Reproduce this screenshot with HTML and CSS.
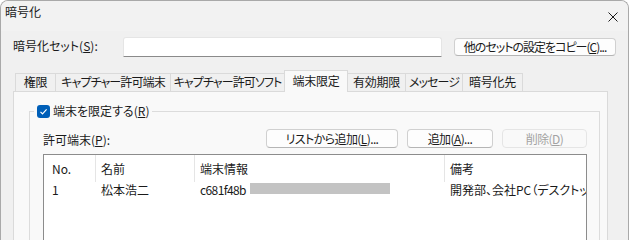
FILE: index.html
```html
<!DOCTYPE html>
<html lang="ja">
	<head>
		<meta charset="utf-8"/>
		<title>暗号化</title>
		<link rel="stylesheet" href="styles.css">
	</head>
	<body>
		<div class="window">
			<div class="titlebar">
				<span class="title">暗号化</span>
				<svg class="close" width="10" height="10" viewBox="0 0 10 10">
					<path d="M0.5 0.5L9.5 9.5M9.5 0.5L0.5 9.5" stroke="#1b1b1b" stroke-width="1" fill="none"/>
				</svg>
			</div>
			<div class="content">
				<div class="set-row">
					<span class="set-label">暗号化セット(<u>S</u>):</span>
					<div class="textbox"></div>
					<button class="btn btn-copy">他のセットの設定をコピー(<u>C</u>)...</button>
				</div>
				<div class="tabs">
					<div class="tab">権限</div>
					<div class="tab tab-kana">キャプチャー許可端末</div>
					<div class="tab tab-kana">キャプチャー許可ソフト</div>
					<div class="tab selected">端末限定</div>
					<div class="tab">有効期限</div>
					<div class="tab tab-kana">メッセージ</div>
					<div class="tab">暗号化先</div>
				</div>
				<div class="panel">
					<fieldset class="group">
						<legend class="group-title">
							<span class="checkbox">
								<svg width="13" height="13" viewBox="0 0 13 13">
									<path d="M3.5 6.8L5.5 8.8L9.6 4.4" stroke="#ffffff" stroke-width="1.2" fill="none"/>
								</svg>
							</span>
							<span>端末を限定する(<u>R</u>)</span>
						</legend>
						<div class="list-bar">
							<span class="list-label">許可端末(<u>P</u>):</span>
							<button class="btn btn-fromlist">リストから追加(<u>L</u>)...</button>
							<button class="btn btn-add">追加(<u>A</u>)...</button>
							<button class="btn btn-delete" disabled>削除(<u>D</u>)</button>
						</div>
						<div class="list">
							<div class="list-head">
								<div class="cell col-no">No.</div>
								<div class="cell col-name">名前</div>
								<div class="cell col-info">端末情報</div>
								<div class="cell col-note">備考</div>
							</div>
							<div class="list-row">
								<div class="cell col-no">1</div>
								<div class="cell col-name">松本浩二</div>
								<div class="cell col-info"><span class="terminal-id">c681f48b</span><span class="masked"></span></div>
								<div class="cell col-note">開発部、会社PC（デスクトップ）</div>
							</div>
						</div>
					</fieldset>
				</div>
			</div>
		</div>
	</body>
</html>
```

FILE: styles.css
```css
html, body {
	margin: 0;
	background-color: #ffffff;
	overflow: hidden;
}
body {
	font-family: "Noto Sans CJK JP", "Noto Sans", sans-serif;
	font-size: 12px;
	font-feature-settings: "palt";
	color: #1a1a1a;
}
u {
	text-underline-offset: 1px;
}
.window {
	width: 629px;
	height: 260px;
	box-sizing: border-box;
	border: 1px solid #a9a9a9;
	border-bottom: none;
	border-radius: 8px 8px 0 0;
	background-color: #f0f0f0;
	overflow: hidden;
}
.titlebar {
	height: 30px;
	box-sizing: border-box;
	padding: 3px 10px 0 4px;
	display: flex;
	justify-content: space-between;
	align-items: flex-start;
	background-color: #f2f2f2;
}
.title {
	line-height: 16px;
}
.close {
	margin-top: 8px;
}
.content {
	padding: 6px 0 0 12px;
}
.set-row {
	display: flex;
	align-items: center;
	height: 20px;
}
.set-label {
	width: 110px;
	line-height: 16px;
	padding-bottom: 3px;
}
.textbox {
	width: 319px;
	height: 20px;
	box-sizing: border-box;
	background-color: #ffffff;
	border: 1px solid #e5e5e5;
	border-bottom-color: #8a8a8a;
	border-radius: 3px 3px 0 0;
	margin-right: 12px;
}
.btn {
	font-family: inherit;
	font-size: 12px;
	font-feature-settings: "palt";
	letter-spacing: -0.6px;
	white-space: nowrap;
	color: #1a1a1a;
	background-color: #fdfdfd;
	border: 1px solid #d0d0d0;
	border-bottom-color: #b5b5b5;
	border-radius: 4px;
	padding: 0;
	height: 19px;
	line-height: 16px;
	box-sizing: border-box;
}
.btn-copy {
	width: 162px;
	height: 18px;
	letter-spacing: -1px;
}
.btn-delete {
	color: #a3a3a3;
	background-color: #f9f9f9;
	border-color: #e5e5e5;
}
.tabs {
	display: flex;
	align-items: flex-end;
	height: 21px;
	margin-top: 13px;
	padding-left: 2px;
	position: relative;
	z-index: 1;
}
.tab {
	height: 18px;
	box-sizing: border-box;
	line-height: 16px;
	text-align: center;
	white-space: nowrap;
	letter-spacing: -0.3px;
	border: 1px solid #dadada;
	border-bottom: none;
	margin-right: -1px;
	background-color: #f0f0f0;
}
.tab-kana {
	letter-spacing: -0.9px;
}
.tab:nth-child(1) { width: 41px; }
.tab:nth-child(2) { width: 116px; }
.tab:nth-child(3) { width: 115px; }
.tab:nth-child(4) { width: 64px; }
.tab:nth-child(5) { width: 59px; }
.tab:nth-child(6) { width: 58px; }
.tab:nth-child(7) { width: 61px; }
.tab.selected {
	height: 22px;
	margin-bottom: -1px;
	line-height: 19px;
	position: relative;
	background-color: #f9f9f9;
}
.panel {
	width: 595px;
	height: 200px;
	box-sizing: border-box;
	background-color: #f9f9f9;
	border: 1px solid #dadada;
	padding: 11px 7px 0 15px;
}
.group {
	margin: 0;
	height: 180px;
	box-sizing: border-box;
	border: 1px solid #dcdcdc;
	padding: 0 12px 0 13px;
}
.group-title {
	display: flex;
	align-items: center;
	gap: 3px;
	margin-left: -9px;
	padding: 0 3px;
	line-height: 16px;
}
.checkbox {
	width: 13px;
	height: 13px;
	border-radius: 3px;
	background-color: #005fb8;
	display: flex;
}
.list-bar {
	display: flex;
	align-items: flex-end;
	gap: 9px;
	margin-top: 10px;
}
.list-label {
	flex: 1;
	line-height: 16px;
}
.btn-fromlist {
	width: 132px;
}
.btn-add {
	width: 86px;
}
.btn-delete {
	width: 85px;
}
.list {
	margin-top: 6px;
	height: 120px;
	background-color: #ffffff;
	border: 1px solid #8c8c8c;
	overflow: hidden;
}
.list-head, .list-row {
	display: grid;
	grid-template-columns: 52px 99px 250px 1fr;
}
.list-head .cell {
	height: 27px;
	line-height: 27px;
	border-right: 1px solid #e5e5e5;
}
.list-head .col-note {
	border-right: none;
}
.list-row .cell {
	line-height: 16px;
}
.cell {
	padding-left: 5px;
	white-space: nowrap;
	overflow: hidden;
}
.col-no {
	padding-left: 8px;
}
.terminal-id {
	letter-spacing: -0.6px;
}
.masked {
	display: inline-block;
	width: 140px;
	height: 11px;
	margin-left: 4px;
	vertical-align: 1px;
	background-color: #c3c3c3;
}
```
